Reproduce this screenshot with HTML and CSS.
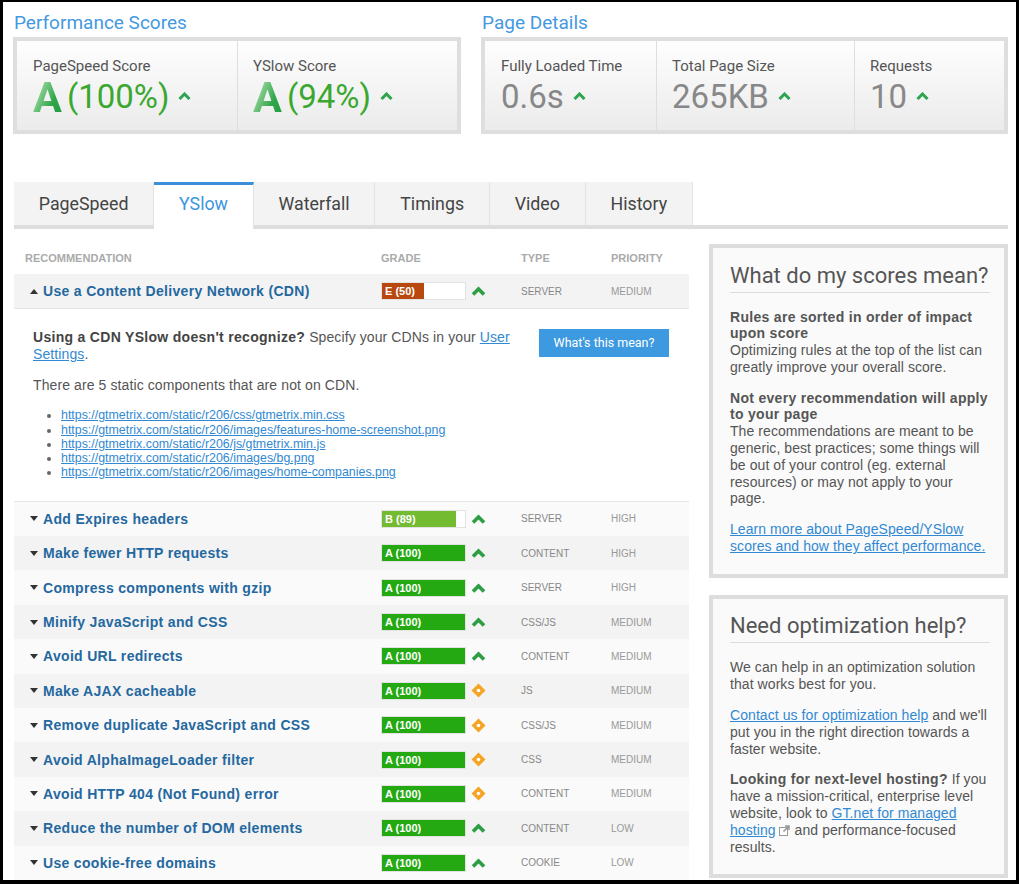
FILE: index.html
```html
<!DOCTYPE html>
<html>
<head>
<meta charset="utf-8">
<title>GTmetrix YSlow</title>
<link rel="stylesheet" href="styles.css">
</head>
<body>
<div class="frame">
  <div class="summary">
    <section class="scores">
      <h2 class="sec-title">Performance Scores</h2>
      <div class="box">
        <div class="cell half">
          <div class="label">PageSpeed Score</div>
          <div class="value"><span class="grade">A</span><span class="num green">(100%)</span><svg class="caret" viewBox="0 0 13 8"><polyline points="1.5,7 6.5,2 11.5,7"/></svg></div>
        </div>
        <div class="cell half">
          <div class="label">YSlow Score</div>
          <div class="value"><span class="grade">A</span><span class="num green">(94%)</span><svg class="caret" viewBox="0 0 13 8"><polyline points="1.5,7 6.5,2 11.5,7"/></svg></div>
        </div>
      </div>
    </section>
    <section class="details">
      <h2 class="sec-title">Page Details</h2>
      <div class="box">
        <div class="cell w1">
          <div class="label">Fully Loaded Time</div>
          <div class="value"><span class="num gray">0.6s</span><svg class="caret" viewBox="0 0 13 8"><polyline points="1.5,7 6.5,2 11.5,7"/></svg></div>
        </div>
        <div class="cell w2">
          <div class="label">Total Page Size</div>
          <div class="value"><span class="num gray">265KB</span><svg class="caret" viewBox="0 0 13 8"><polyline points="1.5,7 6.5,2 11.5,7"/></svg></div>
        </div>
        <div class="cell w3">
          <div class="label">Requests</div>
          <div class="value"><span class="num gray">10</span><svg class="caret" viewBox="0 0 13 8"><polyline points="1.5,7 6.5,2 11.5,7"/></svg></div>
        </div>
      </div>
    </section>
  </div>

  <nav class="tabs">
    <a class="tab">PageSpeed</a>
    <a class="tab active">YSlow</a>
    <a class="tab">Waterfall</a>
    <a class="tab">Timings</a>
    <a class="tab">Video</a>
    <a class="tab">History</a>
  </nav>

  <div class="content">
    <div class="main">
      <div class="cols thead">
        <div class="c-rec">Recommendation</div>
        <div>Grade</div>
        <div>Type</div>
        <div>Priority</div>
      </div>

      <div class="cols row r-a">
        <div class="c-rec"><span class="tri up"></span><a class="rule">Use a Content Delivery Network (CDN)</a></div>
        <div class="c-grade"><span class="bar"><span class="fill" style="width:50%;background:#b9480f">E (50)</span></span><svg class="ico" viewBox="0 0 15 10"><polyline class="chev" points="2,8.5 7.5,3 13,8.5"/></svg></div>
        <div class="c-type">SERVER</div>
        <div class="c-pri">MEDIUM</div>
      </div>

      <div class="detail">
        <div class="cdn-top">
          <p class="cdn-msg"><b>Using a CDN YSlow doesn't recognize?</b> Specify your CDNs in your <a class="lnk">User</a> <a class="lnk">Settings</a>.</p>
          <a class="btn">What's this mean?</a>
        </div>
        <p class="cdn-p">There are 5 static components that are not on CDN.</p>
        <ul class="urls">
          <li><a class="lnk">https://gtmetrix.com/static/r206/css/gtmetrix.min.css</a></li>
          <li><a class="lnk">https://gtmetrix.com/static/r206/images/features-home-screenshot.png</a></li>
          <li><a class="lnk">https://gtmetrix.com/static/r206/js/gtmetrix.min.js</a></li>
          <li><a class="lnk">https://gtmetrix.com/static/r206/images/bg.png</a></li>
          <li><a class="lnk">https://gtmetrix.com/static/r206/images/home-companies.png</a></li>
        </ul>
      </div>

      <div class="cols row r-b">
        <div class="c-rec"><span class="tri"></span><a class="rule">Add Expires headers</a></div>
        <div class="c-grade"><span class="bar"><span class="fill" style="width:89%;background:#73bb31">B (89)</span></span><svg class="ico" viewBox="0 0 15 10"><polyline class="chev" points="2,8.5 7.5,3 13,8.5"/></svg></div>
        <div class="c-type">SERVER</div>
        <div class="c-pri">HIGH</div>
      </div>
      <div class="cols row r-a">
        <div class="c-rec"><span class="tri"></span><a class="rule">Make fewer HTTP requests</a></div>
        <div class="c-grade"><span class="bar"><span class="fill a" style="width:100%">A (100)</span></span><svg class="ico" viewBox="0 0 15 10"><polyline class="chev" points="2,8.5 7.5,3 13,8.5"/></svg></div>
        <div class="c-type">CONTENT</div>
        <div class="c-pri">HIGH</div>
      </div>
      <div class="cols row r-b">
        <div class="c-rec"><span class="tri"></span><a class="rule">Compress components with gzip</a></div>
        <div class="c-grade"><span class="bar"><span class="fill a" style="width:100%">A (100)</span></span><svg class="ico" viewBox="0 0 15 10"><polyline class="chev" points="2,8.5 7.5,3 13,8.5"/></svg></div>
        <div class="c-type">SERVER</div>
        <div class="c-pri">HIGH</div>
      </div>
      <div class="cols row r-a">
        <div class="c-rec"><span class="tri"></span><a class="rule">Minify JavaScript and CSS</a></div>
        <div class="c-grade"><span class="bar"><span class="fill a" style="width:100%">A (100)</span></span><svg class="ico" viewBox="0 0 15 10"><polyline class="chev" points="2,8.5 7.5,3 13,8.5"/></svg></div>
        <div class="c-type">CSS/JS</div>
        <div class="c-pri">MEDIUM</div>
      </div>
      <div class="cols row r-b">
        <div class="c-rec"><span class="tri"></span><a class="rule">Avoid URL redirects</a></div>
        <div class="c-grade"><span class="bar"><span class="fill a" style="width:100%">A (100)</span></span><svg class="ico" viewBox="0 0 15 10"><polyline class="chev" points="2,8.5 7.5,3 13,8.5"/></svg></div>
        <div class="c-type">CONTENT</div>
        <div class="c-pri">MEDIUM</div>
      </div>
      <div class="cols row r-a">
        <div class="c-rec"><span class="tri"></span><a class="rule">Make AJAX cacheable</a></div>
        <div class="c-grade"><span class="bar"><span class="fill a" style="width:100%">A (100)</span></span><svg class="ico dia" viewBox="0 0 15 15"><polygon points="7.5,0.5 14.5,7.5 7.5,14.5 0.5,7.5"/><circle cx="7.5" cy="7.5" r="1.8"/></svg></div>
        <div class="c-type">JS</div>
        <div class="c-pri">MEDIUM</div>
      </div>
      <div class="cols row r-b">
        <div class="c-rec"><span class="tri"></span><a class="rule">Remove duplicate JavaScript and CSS</a></div>
        <div class="c-grade"><span class="bar"><span class="fill a" style="width:100%">A (100)</span></span><svg class="ico dia" viewBox="0 0 15 15"><polygon points="7.5,0.5 14.5,7.5 7.5,14.5 0.5,7.5"/><circle cx="7.5" cy="7.5" r="1.8"/></svg></div>
        <div class="c-type">CSS/JS</div>
        <div class="c-pri">MEDIUM</div>
      </div>
      <div class="cols row r-a">
        <div class="c-rec"><span class="tri"></span><a class="rule">Avoid AlphaImageLoader filter</a></div>
        <div class="c-grade"><span class="bar"><span class="fill a" style="width:100%">A (100)</span></span><svg class="ico dia" viewBox="0 0 15 15"><polygon points="7.5,0.5 14.5,7.5 7.5,14.5 0.5,7.5"/><circle cx="7.5" cy="7.5" r="1.8"/></svg></div>
        <div class="c-type">CSS</div>
        <div class="c-pri">MEDIUM</div>
      </div>
      <div class="cols row r-b">
        <div class="c-rec"><span class="tri"></span><a class="rule">Avoid HTTP 404 (Not Found) error</a></div>
        <div class="c-grade"><span class="bar"><span class="fill a" style="width:100%">A (100)</span></span><svg class="ico dia" viewBox="0 0 15 15"><polygon points="7.5,0.5 14.5,7.5 7.5,14.5 0.5,7.5"/><circle cx="7.5" cy="7.5" r="1.8"/></svg></div>
        <div class="c-type">CONTENT</div>
        <div class="c-pri">MEDIUM</div>
      </div>
      <div class="cols row r-a">
        <div class="c-rec"><span class="tri"></span><a class="rule">Reduce the number of DOM elements</a></div>
        <div class="c-grade"><span class="bar"><span class="fill a" style="width:100%">A (100)</span></span><svg class="ico" viewBox="0 0 15 10"><polyline class="chev" points="2,8.5 7.5,3 13,8.5"/></svg></div>
        <div class="c-type">CONTENT</div>
        <div class="c-pri">LOW</div>
      </div>
      <div class="cols row r-b">
        <div class="c-rec"><span class="tri"></span><a class="rule">Use cookie-free domains</a></div>
        <div class="c-grade"><span class="bar"><span class="fill a" style="width:100%">A (100)</span></span><svg class="ico" viewBox="0 0 15 10"><polyline class="chev" points="2,8.5 7.5,3 13,8.5"/></svg></div>
        <div class="c-type">COOKIE</div>
        <div class="c-pri">LOW</div>
      </div>
    </div>

    <aside class="side">
      <div class="sbox">
        <h3 class="s-title">What do my scores mean?</h3>
        <p><b>Rules are sorted in order of impact upon score</b><br>Optimizing rules at the top of the list can greatly improve your overall score.</p>
        <p><b>Not every recommendation will apply to your page</b><br>The recommendations are meant to be generic, best practices; some things will be out of your control (eg. external resources) or may not apply to your page.</p>
        <p><a class="lnk">Learn more about PageSpeed/YSlow</a> <a class="lnk">scores and how they affect performance.</a></p>
      </div>
      <div class="sbox second">
        <h3 class="s-title">Need optimization help?</h3>
        <p>We can help in an optimization solution that works best for you.</p>
        <p><a class="lnk">Contact us for optimization help</a> and we'll<br>put you in the right direction towards a faster website.</p>
        <p><b>Looking for next-level hosting?</b> If you<br>have a mission-critical, enterprise level<br>website, look to <a class="lnk">GT.net for managed</a><br><a class="lnk">hosting</a><svg class="ext" viewBox="0 0 11 11"><rect x="0.5" y="2.5" width="8" height="8"/><path d="M4.5 6.5 L9.5 1.5 M6 1 H10 V5"/></svg> and performance-focused<br>results.</p>
      </div>
    </aside>
  </div>
</div>
</body>
</html>
```

FILE: styles.css
```css
* { box-sizing: border-box; }
html, body { margin: 0; padding: 0; background: #fff; }

.frame {
  width: 1019px;
  height: 884px;
  border: solid #000;
  border-width: 2px 3px 4px 3px;
  padding: 0 8px 0 11px;
  overflow: hidden;
  background: #fff;
  font-family: "Liberation Sans", Arial, sans-serif;
  color: #555;
}

/* ---------- summary ---------- */
.summary { display: flex; gap: 20px; margin-left: -1px; }
.scores { width: 448px; }
.details { width: 527px; }

.sec-title {
  margin: 9px 0 2px 1px;
  font: 400 19px/24px Roboto, "Noto Sans", sans-serif;
  color: #4499df;
}

.box {
  display: flex;
  height: 97px;
  border: 4px solid #dedede;
}
.cell {
  background: linear-gradient(#fefefe, #ebebeb);
  padding: 16px 0 0 16px;
  font-family: Roboto, "Noto Sans", sans-serif;
}
.cell + .cell { border-left: 1px solid #dedede; padding-left: 15px; }
.half { flex: 1 1 0; }
.w1 { width: 171px; }
.w2 { width: 198px; }
.w3 { flex: 1; }

.label { font-size: 15px; line-height: 18px; color: #555; }
.value { font-size: 43px; line-height: 44px; height: 44px; white-space: nowrap; }
.grade {
  font-weight: 700;
  background: linear-gradient(115deg, #c4e6c2 0%, #7cc985 35%, #2fa64a 65%, #229a3e 100%);
  -webkit-background-clip: text;
  background-clip: text;
  color: transparent;
}
.num { font-size: 33px; vertical-align: 4px; }
.grade + .num { margin-left: 5px; }
.green { color: #3aa830; }
.gray { color: #888; }
.caret {
  width: 13px; height: 8px;
  margin-left: 9px;
  vertical-align: 12px;
}
.caret polyline { fill: none; stroke: #2ea44f; stroke-width: 3; }

/* ---------- tabs ---------- */
.tabs {
  display: flex;
  align-items: flex-start;
  margin-top: 48px;
  height: 47px;
  border-bottom: 4px solid #dddddd;
}
.tab {
  height: 43px;
  padding: 0 24.8px;
  background: #f3f3f3;
  border-right: 1px solid #e3e3e3;
  font: 400 17.8px/43px Roboto, "Noto Sans", sans-serif;
  color: #444;
}
.tab.active {
  height: 47px;
  background: #fff;
  border-top: 3px solid #3b8fd9;
  line-height: 38px;
  color: #3b97de;
}

/* ---------- content ---------- */
.content { display: flex; gap: 20px; align-items: flex-start; }
.main { width: 675px; }
.side { width: 299px; margin-top: 15px; }

.cols {
  display: grid;
  grid-template-columns: 367px 140px 90px 1fr;
  align-items: center;
}
.thead {
  padding: 23px 0 9px;
  font-size: 11px;
  line-height: 13px;
  font-weight: 700;
  color: #aaa;
  text-transform: uppercase;
}
.thead .c-rec { padding-left: 11px; }

.row { height: 34.4px; }
.r-a { background: #f3f3f3; }
.r-b { background: #fafafa; }

.c-rec { display: flex; align-items: center; padding-left: 16px; }
.tri {
  width: 0; height: 0;
  border-left: 4px solid transparent;
  border-right: 4px solid transparent;
  border-top: 5px solid #333;
  margin-right: 5px;
}
.tri.up { border-top: 0; border-bottom: 5px solid #333; }
.rule {
  font-size: 14px;
  font-weight: 700;
  letter-spacing: 0.32px;
  color: #24689f;
  white-space: nowrap;
}

.c-grade { display: flex; align-items: center; }
.bar {
  display: block;
  width: 85px;
  height: 18px;
  border: 1px solid #e2e2e2;
  background: #fff;
}
.fill {
  display: block;
  height: 16px;
  padding-left: 3px;
  font-size: 11px;
  line-height: 16px;
  font-weight: 700;
  color: #fff;
  white-space: nowrap;
  overflow: hidden;
}
.fill.a { background: #24a913; }
.ico { width: 15px; height: 10px; margin-left: 5px; }
.ico.dia { height: 15px; }
.chev { fill: none; stroke: #2e9e44; stroke-width: 3.6; }
.dia polygon { fill: #f5a425; }
.dia circle { fill: #fff; }

.c-type { font-size: 10px; color: #888; }
.c-pri { font-size: 10px; color: #999; }

/* ---------- detail ---------- */
.detail {
  background: #fff;
  border-top: 1px solid #e6e6e6;
  border-bottom: 1px solid #e6e6e6;
  padding: 20px 20px 21px 19px;
  font-size: 14px;
  line-height: 17px;
  letter-spacing: 0.1px;
  color: #555;
}
.detail p { margin: 0; }
.cdn-top { display: flex; align-items: flex-start; justify-content: space-between; }
.cdn-msg { width: 484px; }
.cdn-msg b { color: #444; letter-spacing: 0.3px; }
.btn {
  display: block;
  width: 130px;
  height: 28px;
  background: #3d9ae0;
  color: #fff;
  font: 400 12.5px/28px Roboto, "Noto Sans", sans-serif;
  letter-spacing: 0;
  text-align: center;
}
.cdn-p { margin-top: 14px !important; }
.urls {
  margin: 14px 0 0;
  padding-left: 28px;
  font-size: 12.4px;
  line-height: 14.25px;
  letter-spacing: 0;
}
.urls li::marker { color: #666; }
.lnk { color: #3289d3; text-decoration: underline; }

/* ---------- sidebar ---------- */
.sbox {
  border: 4px solid #dddddd;
  background: #fafafa;
  padding: 13.5px 14px 19px 17px;
  font-size: 14px;
  line-height: 16.8px;
  letter-spacing: 0.07px;
  color: #555;
}
.sbox.second { margin-top: 17px; }
.sbox p { margin: 14px 0 0; }
.s-title {
  margin: 0 0 16px;
  padding-bottom: 2px;
  border-bottom: 1px solid #dcdcdc;
  font: 400 22px/28px Roboto, "Noto Sans", sans-serif;
  letter-spacing: 0;
  color: #555;
}
.s-title + p { margin-top: 0; }
.sbox b { color: #555; letter-spacing: 0.3px; }
.ext { width: 11px; height: 11px; margin: 0 1px 0 3px; vertical-align: -1px; }
.ext rect { fill: #fff; stroke: #999; }
.ext path { fill: none; stroke: #999; stroke-width: 1.6; }
```
